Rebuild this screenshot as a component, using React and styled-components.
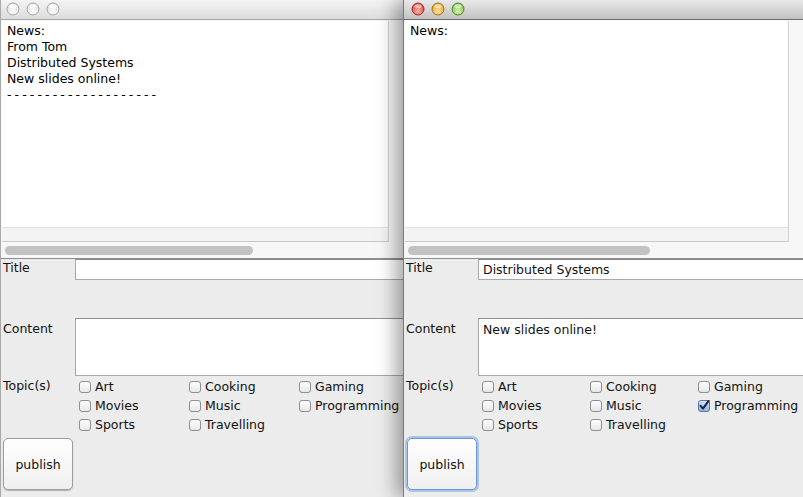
import React from "react";
import styled, { createGlobalStyle } from "styled-components";

const GlobalStyle = createGlobalStyle`
  html, body {
    margin: 0;
    padding: 0;
    background: #ececec;
    overflow: hidden;
  }
  body {
    font-family: "DejaVu Sans", "Liberation Sans", sans-serif;
    font-size: 12.5px;
    color: #111;
  }
`;

const topics = [
  "Art",
  "Cooking",
  "Gaming",
  "Movies",
  "Music",
  "Programming",
  "Sports",
  "Travelling",
];

function Light({ color, active }) {
  const fills = {
    red: ["#ffb3ad", "#e0463d", "#a52a23"],
    yellow: ["#ffe2a0", "#e4a630", "#a97415"],
    green: ["#d8f5b5", "#86c150", "#4b8a26"],
  };
  const [hi, mid, edge] = active ? fills[color] : ["#fbfbfb", "#e2e2e2", "#a6a6a6"];
  const id = `g-${color}-${active ? "a" : "i"}`;
  return (
    <svg width="14" height="14" viewBox="0 0 14 14">
      <defs>
        <radialGradient id={id} cx="50%" cy="70%" r="60%">
          <stop offset="0%" stopColor={hi} />
          <stop offset="100%" stopColor={mid} />
        </radialGradient>
      </defs>
      <circle cx="7" cy="7" r="6" fill={`url(#${id})`} stroke={edge} strokeWidth="1" />
      <ellipse cx="7" cy="4.2" rx="3.6" ry="2" fill="#fff" opacity={active ? 0.55 : 0.8} />
    </svg>
  );
}

function Box({ checked }) {
  return (
    <svg width="12" height="12" viewBox="0 0 12 12">
      <defs>
        <linearGradient id="cbOff" x1="0" y1="0" x2="0" y2="1">
          <stop offset="0%" stopColor="#ffffff" />
          <stop offset="100%" stopColor="#e6e6e6" />
        </linearGradient>
        <linearGradient id="cbOn" x1="0" y1="0" x2="0" y2="1">
          <stop offset="0%" stopColor="#d9e7f8" />
          <stop offset="100%" stopColor="#8fb2e0" />
        </linearGradient>
      </defs>
      <rect
        x="0.5"
        y="0.5"
        width="11"
        height="11"
        rx="2.5"
        fill={checked ? "url(#cbOn)" : "url(#cbOff)"}
        stroke={checked ? "#5878a8" : "#8e8e8e"}
      />
      {checked && (
        <path
          d="M2.6 5.8 L5 8.6 L10.6 0.8"
          fill="none"
          stroke="#17233f"
          strokeWidth="2"
          strokeLinecap="round"
          strokeLinejoin="round"
        />
      )}
    </svg>
  );
}

function Window({ active, news, title, content, checked, colWidth, thumb, width, lightsAt }) {
  return (
    <Frame active={active} width={width}>
      <TitleBar active={active} lightsAt={lightsAt}>
        <Lights>
          <Light color="red" active={active} />
          <Light color="yellow" active={active} />
          <Light color="green" active={active} />
        </Lights>
      </TitleBar>
      <NewsPane>
        <NewsBox>
          <NewsText>
            {news.map((line, i) =>
              /^-+$/.test(line) ? <Dashes key={i}>{line}</Dashes> : <div key={i}>{line}</div>
            )}
          </NewsText>
          <NewsStrip />
        </NewsBox>
        <HScroll>
          <Thumb width={thumb} />
        </HScroll>
      </NewsPane>
      <Form>
        <Row>
          <Label>Title</Label>
          <Field>{title}</Field>
        </Row>
        <Row gap={38}>
          <Label offset={3}>Content</Label>
          <Area>{content}</Area>
        </Row>
        <Row gap={1}>
          <Label offset={1}>Topic(s)</Label>
          <Topics colWidth={colWidth}>
            {topics.map((t) => (
              <Topic key={t}>
                <Box checked={checked.includes(t)} />
                <span>{t}</span>
              </Topic>
            ))}
          </Topics>
        </Row>
        <Publish active={active}>publish</Publish>
      </Form>
    </Frame>
  );
}

export default function App() {
  return (
    <>
      <GlobalStyle />
      <Desktop>
        <Window
          active={false}
          width={403}
          lightsAt={5}
          news={["News:", "From Tom", "Distributed Systems", "New slides online!", "--------------------"]}
          title=""
          content=""
          checked={[]}
          colWidth={110}
          thumb={248}
        />
        <Window
          active
          width={400}
          lightsAt={7}
          news={["News:"]}
          title="Distributed Systems"
          content="New slides online!"
          checked={["Programming"]}
          colWidth={108}
          thumb={242}
        />
      </Desktop>
    </>
  );
}

const Desktop = styled.div`
  display: flex;
  width: 803px;
  height: 497px;
  overflow: hidden;
`;

const Frame = styled.div`
  position: relative;
  z-index: ${(p) => (p.active ? 2 : 1)};
  flex: 0 0 ${(p) => p.width}px;
  width: ${(p) => p.width}px;
  height: 497px;
  overflow: hidden;
  background: #ececec;
  border-left: 1px solid ${(p) => (p.active ? "#7a7a7a" : "#a9a9a9")};
  box-sizing: border-box;
  box-shadow: ${(p) => (p.active ? "-7px 0 18px rgba(0, 0, 0, 0.36)" : "none")};
`;

const TitleBar = styled.div`
  height: 19px;
  border-bottom: 1px solid ${(p) => (p.active ? "#6c6c6c" : "#a8a8a8")};
  background: ${(p) =>
    p.active
      ? "linear-gradient(#e9e9e9, #c2c2c2)"
      : "linear-gradient(#f4f4f4, #dcdcdc)"};
  display: flex;
  align-items: center;
  padding-left: ${(p) => p.lightsAt}px;
`;

const Lights = styled.div`
  display: flex;
  gap: 6px;
  margin-top: -2px;
`;

const NewsPane = styled.div`
  background: #f7f7f7;
  padding: 1px 14px 0 1px;
  border-bottom: 1px solid #8e8e8e;
`;

const NewsBox = styled.div`
  border-right: 1px solid #d2d2d2;
  border-bottom: 1px solid #c8c8c8;
`;

const NewsText = styled.div`
  height: 204px;
  background: #fff;
  padding: 2px 5px 0;
  line-height: 16px;
  color: #000;
`;

const Dashes = styled.div`
  letter-spacing: 3.1px;
`;

const NewsStrip = styled.div`
  height: 13px;
  background: #f3f3f3;
  border-top: 1px solid #e1e1e1;
`;

const HScroll = styled.div`
  height: 16px;
  padding: 4px 0 0 3px;
  box-sizing: border-box;
`;

const Thumb = styled.div`
  width: ${(p) => p.width}px;
  height: 9px;
  border-radius: 5px;
  background: #c2c2c2;
`;

const Form = styled.div`
  display: flex;
  flex-direction: column;
  padding-left: 2px;
`;

const Row = styled.div`
  display: flex;
  align-items: flex-start;
  margin-top: ${(p) => p.gap || 0}px;
`;

const Label = styled.div`
  flex: 0 0 72px;
  line-height: 16px;
  margin-top: ${(p) => p.offset || 1}px;
  color: #111;
`;

const Field = styled.div`
  flex: 0 0 340px;
  height: 21px;
  box-sizing: border-box;
  background: #fff;
  border: 1px solid #a9a9a9;
  border-top-color: #8f8f8f;
  padding: 2px 4px 0;
  line-height: 16px;
`;

const Area = styled(Field)`
  height: 58px;
  padding-top: 3px;
`;

const Topics = styled.div`
  display: grid;
  grid-template-columns: repeat(3, ${(p) => p.colWidth}px);
  grid-auto-rows: 19px;
  padding-left: 4px;
`;

const Topic = styled.div`
  display: flex;
  align-items: center;
  gap: 4px;
  white-space: nowrap;
  span {
    line-height: 16px;
  }
`;

const Publish = styled.button`
  margin-top: 4px;
  margin-left: ${(p) => (p.active ? 1 : 0)}px;
  width: 70px;
  height: 52px;
  border-radius: 5px;
  border: 1px solid ${(p) => (p.active ? "#6d97cf" : "#9c9c9c")};
  background: linear-gradient(#ffffff, #efefef);
  box-shadow: ${(p) =>
    p.active
      ? "0 0 0 2px #a9c4e8, 0 1px 1px rgba(0,0,0,0.2)"
      : "0 1px 1px rgba(0, 0, 0, 0.25)"};
  font-family: "DejaVu Sans", "Liberation Sans", sans-serif;
  font-size: 12.5px;
  color: #111;
  padding: 0;
`;
